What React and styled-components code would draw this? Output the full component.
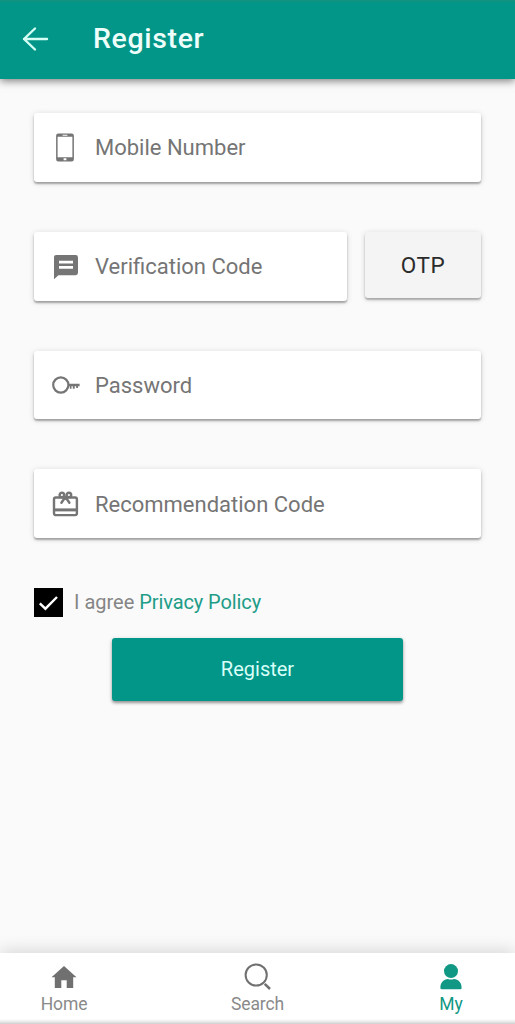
import React from "react";
import styled, { createGlobalStyle } from "styled-components";

const GlobalStyle = createGlobalStyle`
  * { box-sizing: border-box; }
  body {
    margin: 0;
    background: #fafafa;
    font-family: Roboto, "Liberation Sans", sans-serif;
  }
  button { font-family: inherit; border: 0; cursor: pointer; }
`;

const teal = "#029688";
const grey = "#757575";

const Screen = styled.div`
  display: flex;
  flex-direction: column;
  width: 515px;
  height: 1024px;
  overflow: hidden;
  background: #fafafa;
`;

const Header = styled.header`
  display: flex;
  align-items: center;
  flex: none;
  height: 79px;
  padding: 0 22px 2px;
  background: linear-gradient(#16917f, ${teal} 3px);
  box-shadow: 0 2px 8px rgba(0, 0, 0, 0.5);
`;

const BackButton = styled.button`
  display: flex;
  width: 28px;
  padding: 0;
  background: none;
`;

const Title = styled.h1`
  margin: 0 0 0 43px;
  color: #eefffb;
  font-size: 28.5px;
  line-height: 34px;
  font-weight: 500;
  letter-spacing: 0.65px;
`;

const Form = styled.form`
  display: flex;
  flex-direction: column;
  flex: 1;
  padding: 34px 34px 0;
`;

const Fields = styled.div`
  display: flex;
  flex-direction: column;
  gap: 50px;
`;

const FieldRow = styled.div`
  display: flex;
  align-items: flex-start;
  gap: 18px;
`;

const Field = styled.label`
  display: flex;
  align-items: center;
  flex: 1 0 auto;
  height: 68.8px;
  padding: 0 16px;
  border-radius: 3px;
  background: #fff;
  box-shadow: 0 2px 2px rgba(0, 0, 0, 0.3), 0 1px 6px rgba(0, 0, 0, 0.14);
`;

const Placeholder = styled.span`
  margin-left: 15px;
  padding-top: 2px;
  color: ${grey};
  font-size: 22px;
  line-height: 30px;
  white-space: nowrap;
`;

const OtpButton = styled.button`
  flex: none;
  width: 116px;
  height: 66px;
  padding: 0;
  border-radius: 3px;
  background: #f4f4f4;
  color: #2b2b2b;
  font-size: 22.5px;
  letter-spacing: 0.5px;
  box-shadow: 0 2px 2px rgba(0, 0, 0, 0.27), 0 1px 6px rgba(0, 0, 0, 0.14);
`;

const Agreement = styled.div`
  display: flex;
  align-items: center;
  height: 29px;
  margin-top: 49.8px;
  color: #858585;
  font-size: 20px;
  white-space: pre;
`;

const Checkbox = styled.span`
  display: flex;
  width: 29px;
  height: 29px;
  margin-right: 11px;
  background: #000;
`;

const PolicyLink = styled.a`
  color: #219c87;
  letter-spacing: -0.1px;
`;

const SubmitButton = styled.button`
  align-self: center;
  width: 291px;
  height: 63px;
  margin-top: 21px;
  padding: 0;
  border-radius: 3px;
  background: ${teal};
  color: #d9fff8;
  font-size: 20px;
  box-shadow: 0 2px 3px rgba(0, 0, 0, 0.35), 0 1px 5px rgba(0, 0, 0, 0.12);
`;

const NavBar = styled.nav`
  display: flex;
  justify-content: space-between;
  flex: none;
  height: 71px;
  background: linear-gradient(#fff 66px, #f0f0f0 68px, #cfcfcf 71px);
  box-shadow: 0 -2px 16px rgba(0, 0, 0, 0.15);
`;

const NavItem = styled.a`
  display: flex;
  flex-direction: column;
  align-items: center;
  width: 128px;
  padding-top: 9px;
  color: ${(p) => (p.$active ? "#109884" : "#8a8a8a")};
  font-size: 17.5px;
  letter-spacing: -0.1px;
  line-height: 22px;
`;

const NavIcon = styled.svg`
  display: block;
  width: 30px;
  height: 30px;
  margin-bottom: 1px;
`;

const FieldIcon = styled.svg`
  display: block;
  flex: none;
  width: 30px;
  height: 30px;
  fill: ${grey};
`;

const ArrowIcon = () => (
  <svg width="28" height="26" viewBox="0 0 28 26" fill="none" stroke="#d5fff5" strokeWidth="2.4" strokeLinecap="round" strokeLinejoin="round">
    <path d="M25 13H2M13 2.5L2 13l11 10.5" />
  </svg>
);

const PhoneIcon = () => (
  <FieldIcon viewBox="0 -0.5 30 30">
    <path fillRule="evenodd" d="M8.300 1h13.400a2.200 2.200 0 0 1 2.200 2.200v23.600a2.200 2.200 0 0 1-2.200 2.200H8.300a2.200 2.200 0 0 1-2.200-2.200V3.200A2.200 2.200 0 0 1 8.300 1zM7.600 4.300v20.400h14.800V4.300zM12.600 2.200v1h4.800v-1zM13.600 25.800v1.900h2.800v-1.900z" />
  </FieldIcon>
);

const MessageIcon = () => (
  <FieldIcon viewBox="0 0 30 30">
    <path fillRule="evenodd" d="M6.100 4h19.500A2.400 2.400 0 0 1 28 6.400v15.400a2.400 2.400 0 0 1-2.400 2.400H8.400L4 28.300V6.100A2.100 2.100 0 0 1 6.100 4zM9 9.700v2.700h14V9.700zM9 15v2.700h14V15z" />
  </FieldIcon>
);

const KeyIcon = () => (
  <FieldIcon viewBox="-0.8 0 30 30">
    <circle cx="10" cy="15" r="7.600" fill="none" stroke={grey} strokeWidth="2.200" />
    <path d="M17.500 13.700h11.300v2.500h-1.600v1.900h-1.800v-1.900h-1.500v2.500h-1.900v-2.500h-1.300v2.500h-1.700v-2.500h-1.500z" />
  </FieldIcon>
);

const GiftIcon = () => (
  <FieldIcon viewBox="0 -1 30 30">
    <g fill="none" stroke={grey} strokeWidth="2.400" strokeLinecap="round" strokeLinejoin="round">
      <rect x="4" y="7.500" width="22.900" height="17.600" rx="1.800" />
      <circle cx="11.900" cy="5" r="2.300" />
      <circle cx="18.900" cy="5" r="2.300" />
      <path d="M15.400 7l-4 5.800M15.400 7l4 5.800" />
    </g>
    <path d="M3.500 18.400h23.600v3H3.500z" />
  </FieldIcon>
);

const CheckIcon = () => (
  <svg width="29" height="29" viewBox="0 0 29 29" fill="none" stroke="#fff" strokeWidth="2.400">
    <path d="M5.800 15.300l5.600 5.400L23 9" />
  </svg>
);

const HomeIcon = () => (
  <NavIcon viewBox="0 0 30 30" fill="#707070">
    <path d="M15 4L27.500 15.200H24.200V26H17.700V18.200H12.300V26H5.800V15.200H2.500z" />
  </NavIcon>
);

const SearchIcon = () => (
  <NavIcon viewBox="0 0 30 30" fill="none" stroke="#707070">
    <circle cx="13.200" cy="13" r="10.600" strokeWidth="2" />
    <path d="M21.700 21.800l5.300 5.200" strokeWidth="2.500" />
  </NavIcon>
);

const UserIcon = () => (
  <NavIcon viewBox="0 0 30 30" fill="#109884">
    <circle cx="15" cy="9.100" r="7" />
    <path d="M4.400 26v-.6c0-4.700 3.300-8.400 7.600-8.400 1.900.7 4.100.7 6 0 4.300 0 7.600 3.700 7.600 8.400v.6q0 1.200-1.200 1.200H5.600q-1.200 0-1.200-1.200z" />
  </NavIcon>
);

export default function App() {
  return (
    <Screen>
      <GlobalStyle />
      <Header>
        <BackButton aria-label="Back"><ArrowIcon /></BackButton>
        <Title>Register</Title>
      </Header>
      <Form>
        <Fields>
          <FieldRow>
            <Field><PhoneIcon /><Placeholder>Mobile Number</Placeholder></Field>
          </FieldRow>
          <FieldRow>
            <Field><MessageIcon /><Placeholder>Verification Code</Placeholder></Field>
            <OtpButton type="button">OTP</OtpButton>
          </FieldRow>
          <FieldRow>
            <Field><KeyIcon /><Placeholder>Password</Placeholder></Field>
          </FieldRow>
          <FieldRow>
            <Field><GiftIcon /><Placeholder>Recommendation Code</Placeholder></Field>
          </FieldRow>
        </Fields>
        <Agreement>
          <Checkbox role="checkbox" aria-checked="true" aria-label="I agree"><CheckIcon /></Checkbox>
          <span>I agree </span>
          <PolicyLink>Privacy Policy</PolicyLink>
        </Agreement>
        <SubmitButton type="button">Register</SubmitButton>
      </Form>
      <NavBar>
        <NavItem><HomeIcon />Home</NavItem>
        <NavItem><SearchIcon />Search</NavItem>
        <NavItem $active><UserIcon />My</NavItem>
      </NavBar>
    </Screen>
  );
}
